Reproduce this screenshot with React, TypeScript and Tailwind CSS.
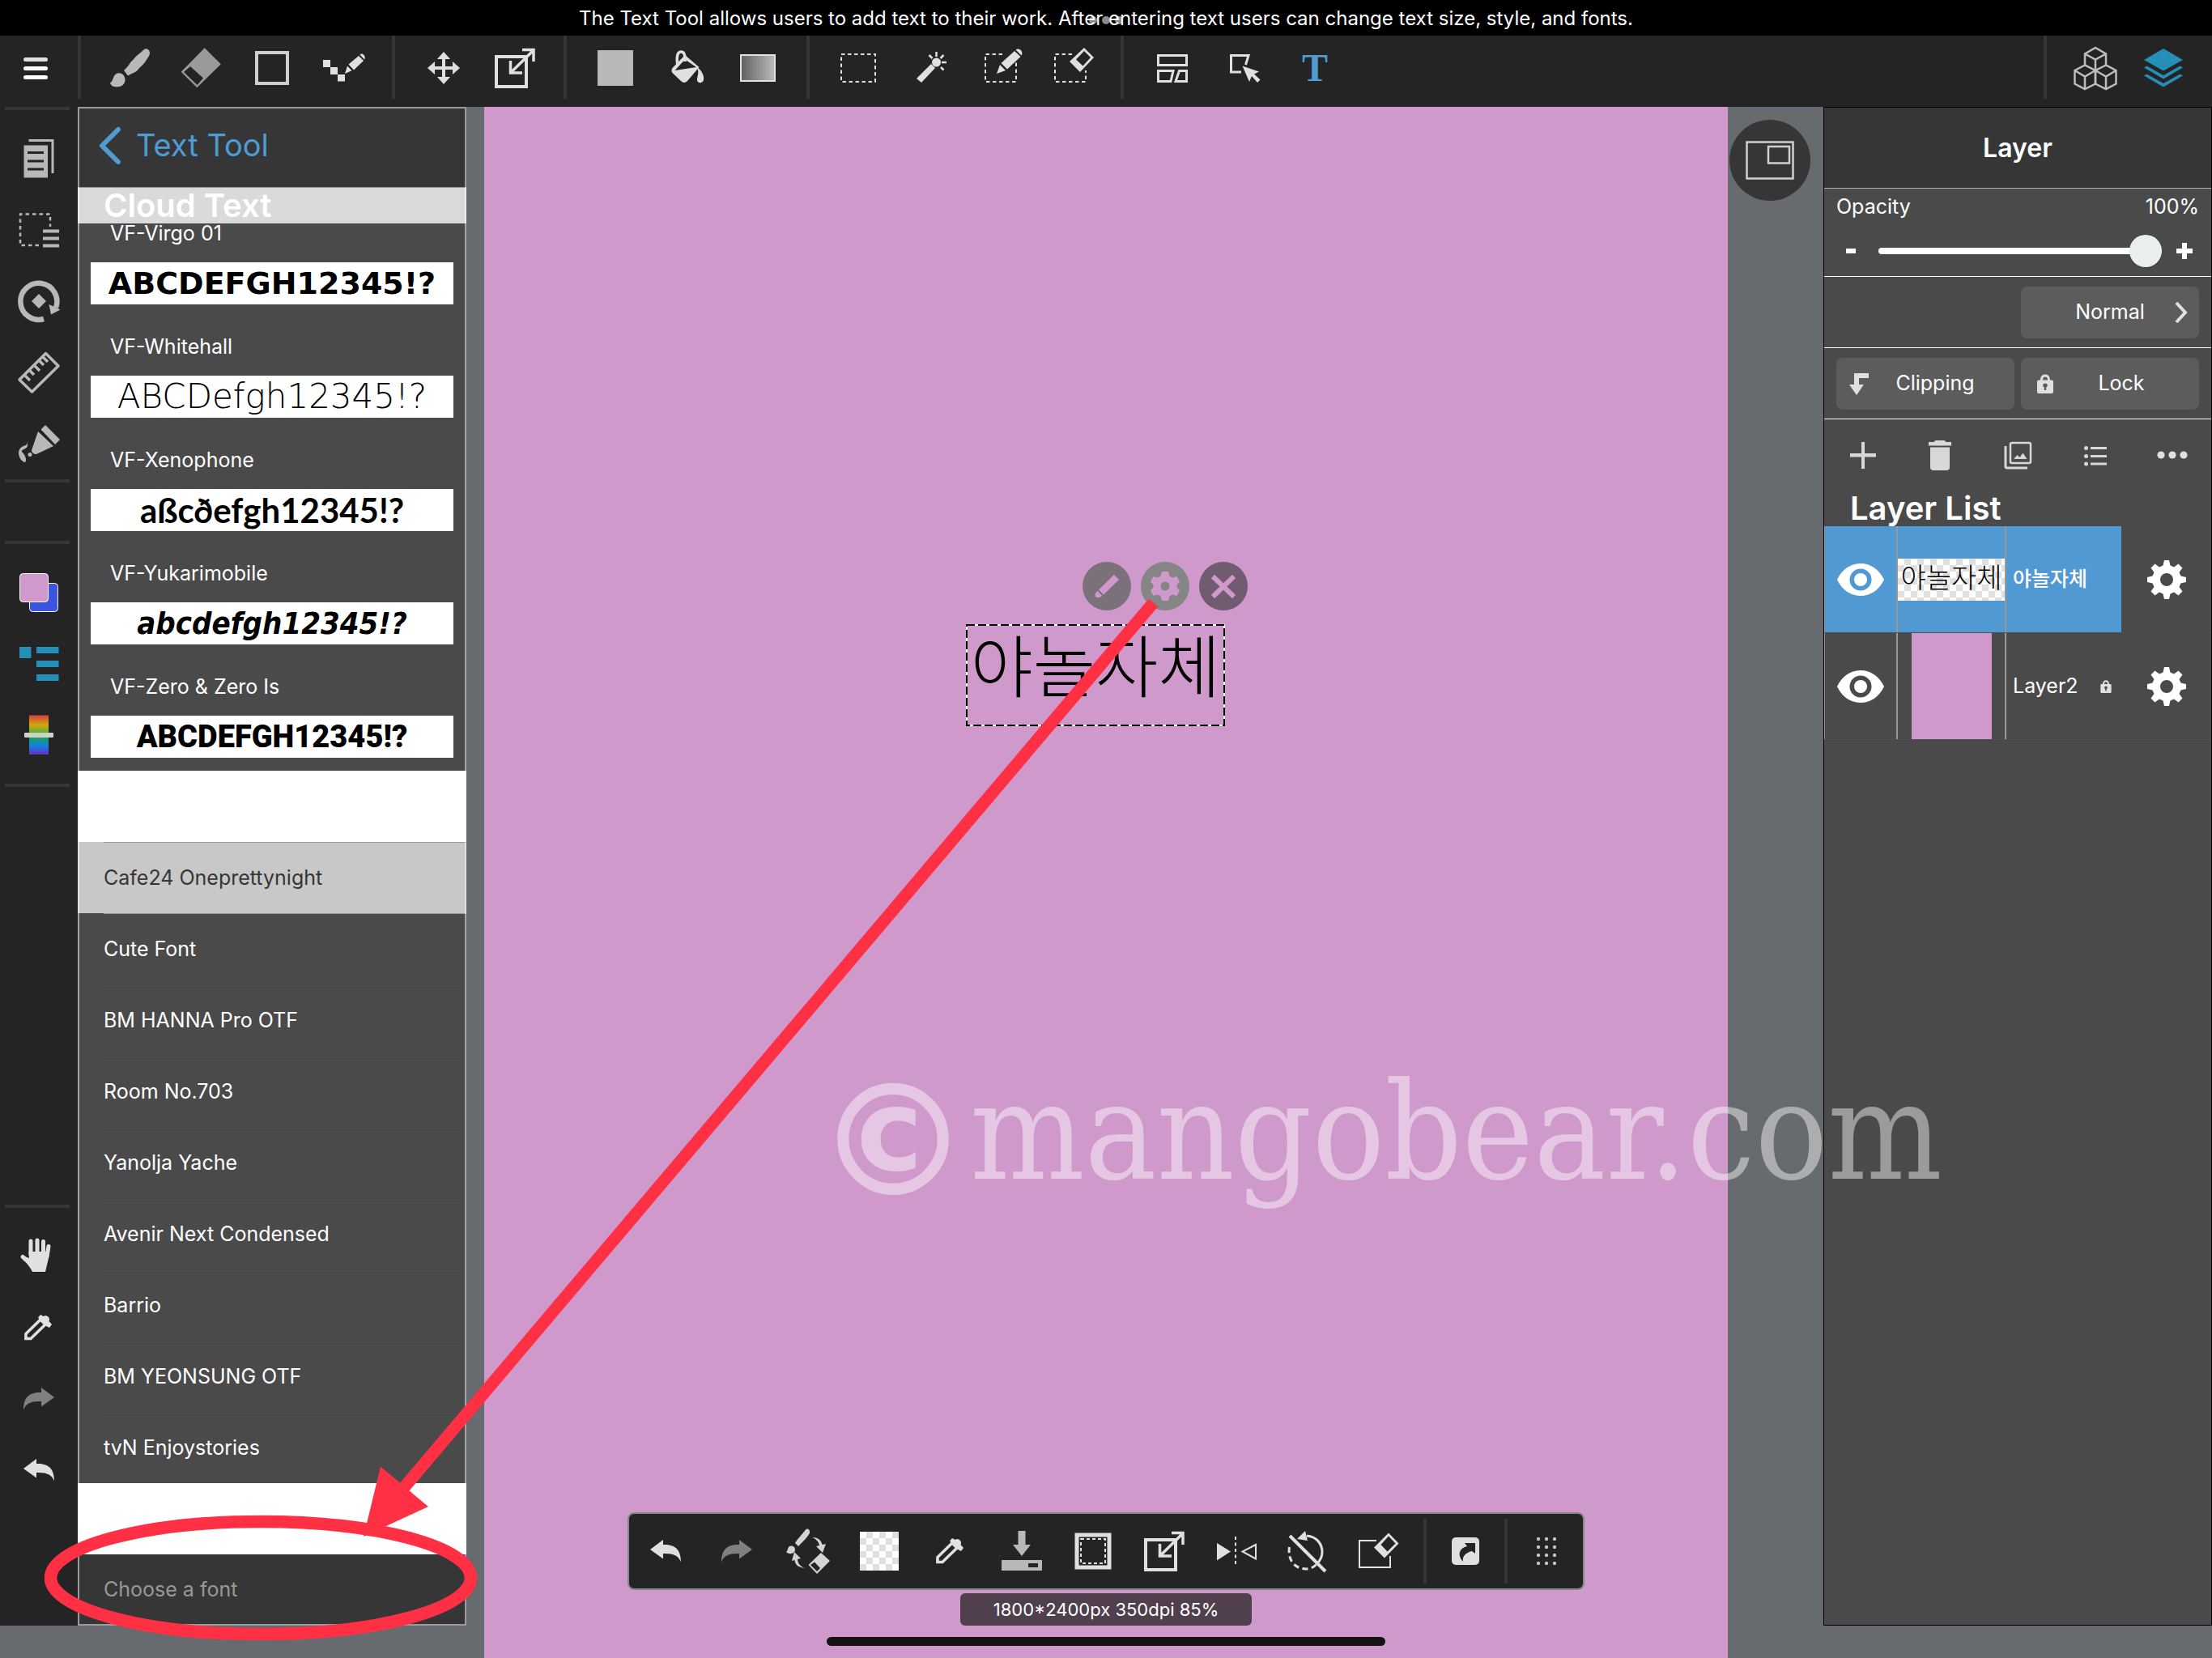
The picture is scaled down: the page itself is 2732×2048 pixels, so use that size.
import { ReactNode } from 'react';

interface IconProps {
  children: ReactNode;
  className?: string;
}

function Icon({ children, className = 'text-[#e0e0e0]' }: IconProps) {
  return (
    <svg viewBox="0 0 56 56" className={`size-14 shrink-0 ${className}`} fill="currentColor" aria-hidden="true">
      {children}
    </svg>
  );
}

const brushIcon = (
  <Icon className="text-[#b8b8b8]">
    <path d="M45 6c3-3.500 8-1 8 3.500 0 3-2 5-3.500 7.500-4 7-8 9-11 13-3 3.500-6 4-12.500 7.500L21 31c2-2 4-4 6-6.500 2-4 4-5 7-8.500 4-5 7-6 11-10z" />
    <path d="M13 34.500c5-1 9 2 9.500 7.500.300 6-4 9.300-10.500 9.300-4 0-7-1.300-8-5.300 4-.500 3-10 9-11.500z" />
  </Icon>
);

const eraserIcon = (
  <Icon className="text-[#9a9a9a]">
    <path fillRule="evenodd" d="M32.700 3.300 52.800 23.300 23.300 52.300 3.700 32.700zM15 26 7 33l16.500 16 7.500-8.500z" />
  </Icon>
);

const squareIcon = (
  <Icon className="text-[#cfcfcf]">
    <path d="M9 9h38v38H9z" fill="none" stroke="currentColor" strokeWidth="4" />
  </Icon>
);

const pixelPenIcon = (
  <Icon>
    <path d="M3 18h9v9H3zM12 27h9v9h-9zM21 36h9v8.500h-9z" />
    <path d="m30 35 3-9.500 5.500 5.700zM34.500 23.500 47 13l6 6-12 11.500zM48.500 11.500c3-3 8 2 5.500 6z" />
  </Icon>
);

const moveIcon = (
  <Icon>
    <path d="M26 26V17h-6l8-9 8 9h-6v9h9v-6l9 8-9 8v-6h-9v9h6l-8 9-8-9h6v-9h-9v6l-9-8 9-8v6z" />
  </Icon>
);

const resizeIcon = (
  <Icon>
    <g fill="none" stroke="currentColor">
      <path d="M5 14h37v37H5z" strokeWidth="4" />
      <path d="M37 5.500h14V20M22.500 19v15H37M23 33.500 51 6" strokeWidth="3.500" />
    </g>
  </Icon>
);

const fillIcon = (
  <Icon className="text-[#b8b8b8]">
    <rect x="6" y="6" width="44" height="44" rx="1" />
  </Icon>
);

const bucketIcon = (
  <Icon>
    <path fillRule="evenodd" d="M26 12 43.500 27 29 44q-4 4-8 0L10.500 34q-2-3 0-6zM26 17.500 13.500 31 40 27z" />
    <path d="M17 25c-1.500-9-1-17 4-17 4.500 0 5 4 5 12" fill="none" stroke="currentColor" strokeWidth="3.500" />
    <path d="M41 27.500c6 3 9 11 8 15-1 5-8 5-8 0 0-5 3-8 0-15z" />
  </Icon>
);

const gradientIcon = (
  <Icon>
    <defs>
      <linearGradient id="tool-gradient">
        <stop offset="0" stopColor="#606060" />
        <stop offset="1" stopColor="#bcbcbc" />
      </linearGradient>
    </defs>
    <rect x="7" y="12" width="42" height="32" fill="url(#tool-gradient)" stroke="currentColor" strokeWidth="2" />
  </Icon>
);

const selectIcon = (
  <Icon>
    <path d="M7 11h42v34H7z" fill="none" stroke="currentColor" strokeWidth="2" strokeDasharray="4.500 3.500" />
  </Icon>
);

const wandIcon = (
  <Icon>
    <path d="m30 23 5 5-17 18-6-5z" />
    <circle cx="36.500" cy="21" r="5.500" />
    <path d="M36.500 8v6M27.500 12l4 4M45.500 12l-4 4M43 21h6M42 27l3.500 3.500" fill="none" stroke="currentColor" strokeWidth="2.500" />
  </Icon>
);

const selectPenIcon = (
  <Icon>
    <path d="M30 11H9v34h38V21" fill="none" stroke="currentColor" strokeWidth="2" strokeDasharray="4.500 3.500" />
    <path d="m23 35 4-11 7 7zM28.500 22 45 7l7.500 7L36 29.500zM46.500 5.500c4-3.500 10 2 7 7z" />
  </Icon>
);

const selectEraserIcon = (
  <Icon>
    <path d="M28 11H7v34h38V31" fill="none" stroke="currentColor" strokeWidth="2" strokeDasharray="4.500 3.500" />
    <path fillRule="evenodd" d="M43 3 55 15 38 33 25 20zM43 7l-10 10.500 8.500 8L51 15z" />
  </Icon>
);

const divideIcon = (
  <Icon>
    <path d="M10.500 12.500h35v12h-35zM10.500 31.500H29L26 44.500H10.500zM45.500 31.500h-9l-4.500 13h13.500z" fill="none" stroke="currentColor" strokeWidth="3" />
  </Icon>
);

const pickIcon = (
  <Icon>
    <path d="M25 33H12.500V12.500H34L30.500 24" fill="none" stroke="currentColor" strokeWidth="3" />
    <path d="m26.500 25.500 20.500 7-6 3 7.500 7-3.500 3.500-7-8-3 7z" />
  </Icon>
);

const cubesIcon = (
  <Icon className="text-[#bdbdbd]">
    <g fill="none" stroke="currentColor" strokeWidth="2.500">
      <path d="M15 24.500V10.500L28 3l13 7.500v14M15 10.500l13 7 13-7M28 17.500V31" />
      <path d="M15 24.500 2.500 31v16.500L15 54l13-6.500V31zM2.500 31 15 38.500 28 31M15 38.500V54" />
      <path d="M41 24.500 28 31v16.500L41 54l12.500-6.500V31zM28 31l13 7.500L53.500 31M41 38.500V54" />
    </g>
  </Icon>
);

const layersIcon = (
  <Icon className="text-[#248fb9]">
    <path d="M24 4 48 18 24 31.500 0 18z" />
    <path d="m0 27.500 3.500-2L24 37l20.500-11.500 3.500 2-24 14zM0 37.500l3.500-2L24 47l20.500-11.500 3.500 2-24 14z" />
  </Icon>
);

const docsIcon = (
  <Icon className="text-[#b8b8b8]">
    <path fillRule="evenodd" d="M9.500 11.500H39v40H9.500zM14 19v3h20v-3zM14 29.500v3h20v-3zM14 39.500v3h20v-3z" />
    <path d="M15.500 5.500H45V46" fill="none" stroke="currentColor" strokeWidth="3" />
  </Icon>
);

const selectionMenuIcon = (
  <Icon className="text-[#b8b8b8]">
    <path d="M28 47H5V8.500h37V24" fill="none" stroke="currentColor" strokeWidth="2.500" strokeDasharray="4.500 4" />
    <path d="M33 27.500h20v4H33zM33 36.500h20v4H33zM33 45.500h20v4H33z" />
  </Icon>
);

const rotateIcon = (
  <Icon className="text-[#b8b8b8]">
    <path d="M34 50A22.500 22.500 0 1 1 49 36" fill="none" stroke="currentColor" strokeWidth="6.500" />
    <path d="m40.500 32 14 6.500L43 44.500zM28 19l9 9-9 9-9-9z" />
  </Icon>
);

const rulerIcon = (
  <Icon className="text-[#b8b8b8]">
    <g fill="none" stroke="currentColor" strokeWidth="3.500" strokeLinejoin="round">
      <path d="M36.500 4.500 52 20 19.500 52 4 37z" />
      <path d="m10 31 7 7M16 25l6 6M22 19l7 7M28 13l6 6M33 9l6 6" />
    </g>
  </Icon>
);

const glueIcon = (
  <Icon className="text-[#b8b8b8]">
    <path d="m36 5 18 18-6 6-17.500-18.500zM27 13l19 18-21 10c-3 0-6-2-6-5z" />
    <circle cx="17" cy="41.500" r="2.500" />
    <path d="M13 24c2 5-1 6-4 7-6 2-7 8-5 13 1 4 5 7 7 7 3-4-1-10-4-13-1-4 8-2 7-10-.2-1.500-.5-3-1-4z" />
  </Icon>
);

const swatchesIcon = (
  <Icon>
    <rect x="16.500" y="16.500" width="35" height="35" rx="4" fill="#3b55de" stroke="#fff" />
    <rect x="4.500" y="4.500" width="35" height="35" rx="4" fill="#cf99cc" stroke="#fff" />
  </Icon>
);

const listIcon = (
  <Icon className="text-[#248fb9]">
    <path d="M4 7h14.500v14H4zM25 7h27.500v8H25zM25 24h27.500v8H25zM25 41h27.500v8H25z" />
  </Icon>
);

const rainbowIcon = (
  <Icon>
    <defs>
      <linearGradient id="rainbow" x2="0" y2="1">
        <stop offset="0" stopColor="#d64040" />
        <stop offset=".25" stopColor="#d0a810" />
        <stop offset=".45" stopColor="#5cb030" />
        <stop offset=".6" stopColor="#189c70" />
        <stop offset=".78" stopColor="#1080e0" />
        <stop offset="1" stopColor="#6a2cc8" />
      </linearGradient>
    </defs>
    <path d="M16 3.500h24V52H16z" fill="url(#rainbow)" />
    <rect x="10" y="25" width="36" height="6" rx="1" fill="#c9d4c6" />
  </Icon>
);

const handIcon = (
  <Icon>
    <path d="M18 9v17M26 8v17M33.500 9.500V26M40 15.500 38 28M8 28.500l10 8" fill="none" stroke="currentColor" strokeWidth="5" strokeLinecap="round" />
    <path d="M15.500 22h24.500l.500 6-4.500 19H20c-3-6-6-10-12-15l2-4 6 2z" />
  </Icon>
);

const pipetteIcon = (
  <Icon>
    <path d="M12 41.500v-6L30 18l6 6-18 17.500z" fill="none" stroke="currentColor" strokeWidth="3.500" />
    <path d="m10.500 37 6 6h-6zM27 15.500l3-3.500 4 2c3-3 9 2 6.500 6l3.500 4-3 4-4-2-8-8z" />
  </Icon>
);

const undoPath = <path d="M9 26 25 14v6c14-.5 22 5 22 21.500-3-8-9-11-22-10.500v6.500z" />;
const redoPath = <path d="M47 26 31 14v6C17 19.500 9 25 9 41.500c3-8 9-11 22-10.500v6.500z" />;
const undoIcon = <Icon>{undoPath}</Icon>;
const redoIcon = <Icon className="text-[#808080]">{redoPath}</Icon>;

const swapIcon = (
  <Icon className="text-[#d4d4d4]">
    <path d="M25 1.500c2-2.500 6 0 5 4C29 9 21 17 16 22l-4-4C15 13 21 7 25 1.500zM5 22c3-1.500 7 0 7 4 0 5-7 7-11 3 2-.5 1.500-5.500 4-7z" />
    <path d="M33 11c7 0 11 3 12.500 9l4.500-1-4 11-8-8 4-1c-1-5-4-8-9-10zM24 49c-8-1-12-4-12.500-10L8 40l3-11 8 8-4 1c0 5 4 9 9 11z" />
    <path fillRule="evenodd" d="M44 30 55 40 39 56 28.500 45zM36 41.500 31 45l8 8 4-4z" />
  </Icon>
);

const saveIcon = (
  <Icon className="text-[#b8b8b8]">
    <path fillRule="evenodd" d="M23.500 3h9v17h6.500L28 34 17 20h6.500zM3 39h50v13H3zM36 43v5h12v-5z" />
  </Icon>
);

const frameIcon = (
  <Icon>
    <g fill="none" stroke="currentColor">
      <path d="M8 8h40v40H8z" strokeWidth="5" />
      <path d="M13 13h30v30H13z" strokeWidth="2" strokeDasharray="4 3" />
    </g>
  </Icon>
);

const flipIcon = (
  <Icon>
    <path d="m5 18 17 10.500L5 39.500z" />
    <path d="M53 20v17.500L36.500 28.500z" fill="none" stroke="currentColor" strokeWidth="2" />
    <path d="M28 10v37" stroke="currentColor" strokeWidth="2" strokeDasharray="4 3.500" />
  </Icon>
);

const noRotateIcon = (
  <Icon>
    <g fill="none" stroke="currentColor" strokeWidth="3">
      <path d="M28 9c12 1 19 10 19 20 0 6-2 10-6 14" />
      <path d="M6.500 23C4 40 14 50 27 50c5 0 10-2 13-6" strokeDasharray="7 4.500" />
      <path d="m7 9 44 44" strokeWidth="4" />
    </g>
    <path d="m16 13 10-10 3 12z" />
  </Icon>
);

const boxEraserIcon = (
  <Icon>
    <path d="M26 15H5v33h38V34" fill="none" stroke="currentColor" strokeWidth="2" />
    <path fillRule="evenodd" d="M41 5.500 53.500 18.500 36 36.500 23 23.500zM41 9.500 31.500 20l8 8.500 10-10z" />
  </Icon>
);

const shareIcon = (
  <Icon>
    <rect x="11" y="11" width="34" height="34" rx="5" />
    <path d="M25 41c-8-9-4-17 5-19l-3-4h13v13l-4-3c-8 2-12 6-11 13z" fill="#242424" />
  </Icon>
);

const dotsIcon = (
  <Icon className="text-[#c4c4c4]">
    {[13, 23, 33, 43].map((y) => [18, 28, 38].map((x) => <circle key={`${x}-${y}`} cx={x} cy={y} r="2.200" />))}
  </Icon>
);

const textToolGlyph = <span className="font-['Liberation_Serif',serif] text-5xl font-bold text-[#4f9bd2]">T</span>;

interface Tool {
  label: string;
  icon: ReactNode;
}

const topGroups: Tool[][] = [
  [
    { label: 'Brush', icon: brushIcon },
    { label: 'Eraser', icon: eraserIcon },
    { label: 'Shape', icon: squareIcon },
    { label: 'Dot pen', icon: pixelPenIcon },
  ],
  [
    { label: 'Move', icon: moveIcon },
    { label: 'Transform', icon: resizeIcon },
  ],
  [
    { label: 'Fill', icon: fillIcon },
    { label: 'Bucket', icon: bucketIcon },
    { label: 'Gradient', icon: gradientIcon },
  ],
  [
    { label: 'Select', icon: selectIcon },
    { label: 'Magic wand', icon: wandIcon },
    { label: 'Select pen', icon: selectPenIcon },
    { label: 'Select eraser', icon: selectEraserIcon },
  ],
  [
    { label: 'Divide', icon: divideIcon },
    { label: 'Operation', icon: pickIcon },
    { label: 'Text', icon: textToolGlyph },
  ],
];

const sideTop: Tool[] = [
  { label: 'Pages', icon: docsIcon },
  { label: 'Selection menu', icon: selectionMenuIcon },
  { label: 'Rotate view', icon: rotateIcon },
  { label: 'Ruler', icon: rulerIcon },
  { label: 'Material', icon: glueIcon },
];

const sideColors: Tool[] = [
  { label: 'Colors', icon: swatchesIcon },
  { label: 'Tool options', icon: listIcon },
  { label: 'Palette', icon: rainbowIcon },
];

const sideBottom: Tool[] = [
  { label: 'Hand', icon: handIcon },
  { label: 'Eyedropper', icon: pipetteIcon },
  { label: 'Redo', icon: redoIcon },
  { label: 'Undo', icon: undoIcon },
];

const shortcuts: Tool[] = [
  { label: 'Undo', icon: undoIcon },
  { label: 'Redo', icon: redoIcon },
  { label: 'Swap brush and eraser', icon: swapIcon },
  { label: 'Transparent', icon: <span className="size-12 bg-[repeating-conic-gradient(#e0e0e0_0_25%,#fff_0_50%)] bg-[length:16px_16px]" /> },
  { label: 'Eyedropper', icon: pipetteIcon },
  { label: 'Save', icon: saveIcon },
  { label: 'Select all', icon: frameIcon },
  { label: 'Transform', icon: resizeIcon },
  { label: 'Flip', icon: flipIcon },
  { label: 'Reset rotation', icon: noRotateIcon },
  { label: 'Clear', icon: boxEraserIcon },
];

const cloudFonts = [
  { name: 'VF-Virgo 01', sample: 'ABCDEFGH12345!?', style: "font-['DejaVu_Sans',sans-serif] text-[38px] font-bold" },
  { name: 'VF-Whitehall', sample: 'ABCDefgh12345!?', style: "font-['DejaVu_Sans',sans-serif] text-[42px] font-extralight" },
  { name: 'VF-Xenophone', sample: 'aßcðefgh12345!?', style: "font-['Lato',sans-serif] text-[42px] font-bold" },
  { name: 'VF-Yukarimobile', sample: 'abcdefgh12345!?', style: "font-['DejaVu_Sans_Condensed','DejaVu_Sans',sans-serif] text-[38px] font-bold italic" },
  { name: 'VF-Zero & Zero Is', sample: 'ABCDEFGH12345!?', style: "font-['Roboto',sans-serif] text-[38px] font-black" },
];

const localFonts = [
  'Cafe24 Oneprettynight',
  'Cute Font',
  'BM HANNA Pro OTF',
  'Room No.703',
  'Yanolja Yache',
  'Avenir Next Condensed',
  'Barrio',
  'BM YEONSUNG OTF',
  'tvN Enjoystories',
];

function ToolButton({ label, icon }: Tool) {
  return (
    <button type="button" aria-label={label} className="flex size-[88px] shrink-0 items-center justify-center">
      {icon}
    </button>
  );
}

function TopBar() {
  return (
    <nav className="flex h-[88px] bg-[#242424]">
      <button type="button" aria-label="Menu" className="flex h-20 w-24 items-center justify-center pr-2">
        <span className="flex flex-col gap-[6px]">
          <span className="h-[5px] w-[30px] rounded-full bg-[#e0e0e0]" />
          <span className="h-[5px] w-[30px] rounded-full bg-white" />
          <span className="h-[5px] w-[30px] rounded-full bg-white" />
        </span>
      </button>
      {topGroups.map((group, i) => (
        <div key={i} className="flex h-[78px] items-center border-l-4 border-[#363636] px-4 pt-[2px]">
          {group.map((tool) => (
            <ToolButton key={tool.label} {...tool} />
          ))}
        </div>
      ))}
      <div className="ml-auto flex h-[78px] items-center border-l-4 border-[#363636] pt-[2px] pr-3 pl-4">
        <ToolButton label="Materials" icon={cubesIcon} />
        <ToolButton label="Layers" icon={layersIcon} />
      </div>
    </nav>
  );
}

function SideGroup({ tools }: { tools: Tool[] }) {
  return (
    <div className="-mx-[2px]">
      {tools.map((tool) => (
        <ToolButton key={tool.label} {...tool} />
      ))}
    </div>
  );
}

function SideBar() {
  return (
    <aside className="flex w-24 shrink-0 flex-col items-center bg-[#242424]">
      <div className="mr-1 w-20 border-y-4 border-[#363636] pt-4">
        <SideGroup tools={sideTop} />
      </div>
      <div className="mt-[72px] mr-1 w-20 border-y-4 border-[#363636] py-4">
        <SideGroup tools={sideColors} />
      </div>
      <div className="mt-auto mr-1 mb-[148px] w-20 border-t-4 border-[#363636] pt-4">
        <SideGroup tools={sideBottom} />
      </div>
    </aside>
  );
}

function FontPanel() {
  return (
    <section className="relative w-[480px] shrink-0 bg-[#4a4a4a]">
      <button type="button" className="flex h-[100px] w-full items-center gap-4 border-b border-[#989898] bg-[#363636] pb-1 pl-6 text-[38px] text-[#4f9bd2]">
        <svg viewBox="0 0 32 48" className="h-12 w-8" fill="none" stroke="currentColor" strokeWidth="6" strokeLinecap="round" strokeLinejoin="round" aria-hidden="true">
          <path d="M26 4 6 24l20 20" />
        </svg>
        Text Tool
      </button>
      <h2 className="relative z-10 h-11 bg-[#dadada] pl-8 text-[40px] leading-[44px] font-semibold text-white">Cloud Text</h2>
      <ul className="-mt-6">
        {cloudFonts.map((font) => (
          <li key={font.name}>
            <button type="button" className="block h-[140px] w-full px-4 text-left">
              <span className="block py-6 pl-6 text-[25px] leading-6">{font.name}</span>
              <span className={`block h-[52px] overflow-hidden bg-white text-center leading-[52px] whitespace-nowrap text-black ${font.style}`}>
                {font.sample}
              </span>
              <span className="block h-4" />
            </button>
          </li>
        ))}
      </ul>
      <div className="h-[88px] bg-white" />
      <ul>
        {localFonts.map((name, i) => (
          <li key={name} className={i === 0 ? 'bg-[#c8c8c8] text-[#363636]' : ''}>
            <button
              type="button"
              className={`ml-8 flex h-[88px] w-[448px] items-center border-t text-[25px] ${i < 2 ? 'border-[#989898]' : 'border-[#464646]'}`}
            >
              {name}
            </button>
          </li>
        ))}
      </ul>
      <div className="h-[88px] bg-white" />
      <button type="button" className="flex h-[88px] w-full items-center bg-[#363636] pl-8 text-[25px] text-[#989898]">
        Choose a font
      </button>
      <div className="pointer-events-none absolute inset-0 z-20 border-2 border-white/50" />
    </section>
  );
}

function Canvas() {
  return (
    <main className="relative -mb-10 flex min-w-0 flex-1 pr-[118px] pl-[22px]">
      <div className="relative flex-1 bg-[#cf99cc]">
        {/* text object placed on the canvas */}
        <div className="absolute top-[639px] left-[595px] h-[126px] w-[320px]">
          <svg className="absolute inset-0 size-full" fill="none" aria-hidden="true">
            <rect x="1" y="1" width="318" height="124" stroke="#fff" strokeWidth="2" />
            <rect x="1" y="1" width="318" height="124" stroke="#000" strokeWidth="2" strokeDasharray="10 4" />
          </svg>
          <p className="text-center font-['Noto_Sans_CJK_KR',sans-serif] text-[84px] leading-[96px] font-light whitespace-nowrap text-black">야놀자체</p>
        </div>
        <div className="absolute top-[562px] left-[739px] flex gap-3 text-[#cf99cc]">
          <button type="button" aria-label="Edit text" className="size-[60px] rounded-full bg-[#7a717a]">
            <svg viewBox="0 0 60 60" fill="currentColor" aria-hidden="true">
              <path d="m39 16 6 6-19 18.500-6-6zM18.500 36l6 6c-3 2-7 3-8.500 1s0-5 2.500-7z" />
            </svg>
          </button>
          <button type="button" aria-label="Text settings" className="size-[60px] rounded-full bg-[#858585]">
            <svg viewBox="0 0 60 60" fill="currentColor" aria-hidden="true">
              <path
                fillRule="evenodd"
                d="M26 12h8l1.500 5.500 3.500 2 5.500-1.500 3.500 6.500-3.500 4v3l3.500 4-3.500 6.500-5.500-1.500-3.500 2L34 48h-8l-1.500-5.500-3.500-2-5.500 1.500-3.500-6.500 3.500-4v-3l-3.500-4 3.500-6.500 5.500 1.500 3.500-2zM30 24.500a5.500 5.500 0 1 0 0 11 5.500 5.500 0 0 0 0-11z"
              />
            </svg>
          </button>
          <button type="button" aria-label="Delete text" className="size-[60px] rounded-full bg-[#715b70]">
            <svg viewBox="0 0 60 60" fill="none" stroke="currentColor" strokeWidth="6" aria-hidden="true">
              <path d="m17 18 26 25M43 18 17 43" />
            </svg>
          </button>
        </div>
        <div className="absolute bottom-[84px] left-1/2 flex h-24 -translate-x-1/2 items-center rounded-lg border-2 border-[#888a88] bg-[#242424] px-px text-white">
          {shortcuts.map((tool) => (
            <ToolButton key={tool.label} {...tool} />
          ))}
          <div className="ml-3 flex h-20 items-center border-x-4 border-[#363636] px-1">
            <ToolButton label="Share" icon={shareIcon} />
          </div>
          <div className="pl-1">
            <ToolButton label="More" icon={dotsIcon} />
          </div>
        </div>
        <p className="absolute bottom-10 left-1/2 h-10 w-[360px] -translate-x-1/2 rounded-md bg-[#50404e] text-center text-[22px] leading-10 text-white">
          1800*2400px 350dpi 85%
        </p>
        <div className="absolute bottom-[15px] left-1/2 h-[11px] w-[690px] -translate-x-1/2 rounded-full bg-[#141414]" />
      </div>
      <button type="button" aria-label="Navigator" className="absolute top-4 right-4 flex size-[100px] items-center justify-center rounded-full bg-[#363636]">
        <svg viewBox="0 0 60 48" className="h-12 w-[60px]" fill="none" stroke="#d0d0d0" strokeWidth="2.500" aria-hidden="true">
          <path d="M1.500 1.500h57v45h-57zM28 7h26v20.500H28z" />
        </svg>
      </button>
    </main>
  );
}

function LockGlyph({ className }: { className: string }) {
  return (
    <svg viewBox="0 0 20 24" className={className} fill="#e0e0e0" aria-hidden="true">
      <path
        fillRule="evenodd"
        d="M4 7.500C4 3 6.500.500 10 .500S16 3 16 7.500h2q2 0 2 2V22q0 2-2 2H2q-2 0-2-2V9.500q0-2 2-2zm3 0h6C13 5 12 3.500 10 3.500S7 5 7 7.500zM10 11.500c-3.500 0-3.500 4-1.200 5v3.500h2.400v-3.500c2.300-1 2.300-5-1.200-5z"
      />
    </svg>
  );
}

interface LayerRowProps {
  name: string;
  active?: boolean;
  thumb: ReactNode;
}

function LayerRow({ name, active, thumb }: LayerRowProps) {
  return (
    <li className="flex h-[132px] border-b border-[#505050]">
      <div className={`flex w-[367px] ${active ? 'bg-[#5199d3] font-medium' : ''}`}>
        <button type="button" aria-label={`Toggle ${name}`} className="flex w-[91px] items-center justify-center border-r-2 border-l border-[#989898]">
          <svg viewBox="0 0 58 40" className="h-10 w-[58px]" fill="#fff" aria-hidden="true">
            <path
              fillRule="evenodd"
              d="M0 20C6 7 17 0 29 0s23 7 29 20c-6 13-17 20-29 20S6 33 0 20zm29-13.500a13.500 13.500 0 1 0 0 27 13.500 13.500 0 0 0 0-27z"
            />
            <circle cx="29" cy="20" r="8" />
          </svg>
        </button>
        <div className="flex w-[134px] items-center justify-center border-r-2 border-[#989898]">{thumb}</div>
        <div className="flex flex-1 items-center justify-between pr-3 pl-2">
          <span className="font-[Inter,'Noto_Sans_CJK_KR',sans-serif] text-[25px]">{name}</span>
          {!active && <LockGlyph className="h-4 w-[14px]" />}
        </div>
      </div>
      <button type="button" aria-label={`${name} settings`} className="flex flex-1 items-center justify-center">
        <svg viewBox="0 0 48 48" className="size-12" fill="#fff" aria-hidden="true">
          <path
            fillRule="evenodd"
            d="M21 0h6l1.500 6.500 4.500 2 5.500-4 5 5-4 5.500 2 4.500L48 21v6l-6.500 1.500-2 4.500 4 5.500-5 5-5.500-4-4.500 2L27 48h-6l-1.500-6.500-4.500-2-5.500 4-5-5 4-5.500-2-4.500L0 27v-6l6.500-1.500 2-4.500-4-5.500 5-5 5.500 4 4.500-2zM24 16a8 8 0 1 0 0 16 8 8 0 0 0 0-16z"
          />
        </svg>
      </button>
    </li>
  );
}

const layerActions: Tool[] = [
  { label: 'Add layer', icon: <Icon className="text-[#d8d8d8]"><path d="M26 12h4v14h14v4.500H30V45h-4V30.500H12V26h14z" /></Icon> },
  {
    label: 'Delete layer',
    icon: (
      <Icon className="text-[#d8d8d8]">
        <path d="M14 12h6.500l2-2h11l2 2H42v4.500H14zM16 18.500h24V43q0 4-4 4H20q-4 0-4-4z" />
      </Icon>
    ),
  },
  {
    label: 'Duplicate layer',
    icon: (
      <Icon className="text-[#d8d8d8]">
        <rect x="19" y="13" width="25" height="25" rx="2" fill="none" stroke="currentColor" strokeWidth="2.500" />
        <path d="M13 17v25q0 2 2 2h25" fill="none" stroke="currentColor" strokeWidth="3" />
        <path d="m23 33 4.500-5 3 3 4-5.500 5 7.500z" />
      </Icon>
    ),
  },
  {
    label: 'Layer menu',
    icon: (
      <Icon className="text-[#d8d8d8]">
        <path d="M22 18h20v3H22zM22 28h20v3H22zM22 37.500h20v3H22z" />
        <circle cx="16.500" cy="19.500" r="2.500" />
        <circle cx="16.500" cy="29.500" r="2.500" />
        <circle cx="16.500" cy="39" r="2.500" />
      </Icon>
    ),
  },
  {
    label: 'More',
    icon: (
      <Icon className="text-[#e0e0e0]">
        <circle cx="14" cy="28" r="4.600" />
        <circle cx="28" cy="28" r="4.600" />
        <circle cx="42" cy="28" r="4.600" />
      </Icon>
    ),
  },
];

function LayerPanel() {
  return (
    <aside className="w-[480px] shrink-0 border border-black bg-[#4a4a4a] text-[25px]">
      <h2 className="flex h-[99px] items-center justify-center bg-[#363636] text-[32px] font-semibold">Layer</h2>
      <div className="border-t border-[#b0b0b0] px-[15px]">
        <div className="flex h-[46px] items-center justify-between">
          <label htmlFor="opacity">Opacity</label>
          <span>100%</span>
        </div>
        <div className="flex h-[62px] items-center">
          <button type="button" aria-label="Decrease opacity" className="flex w-[52px] justify-start pl-3">
            <span className="h-[6px] w-3 bg-white" />
          </button>
          <input
            id="opacity"
            type="range"
            min="0"
            max="100"
            defaultValue="100"
            className="h-10 min-w-0 flex-1 appearance-none bg-transparent [&::-webkit-slider-runnable-track]:h-2 [&::-webkit-slider-runnable-track]:rounded-full [&::-webkit-slider-runnable-track]:bg-white [&::-webkit-slider-thumb]:-mt-4 [&::-webkit-slider-thumb]:size-10 [&::-webkit-slider-thumb]:appearance-none [&::-webkit-slider-thumb]:rounded-full [&::-webkit-slider-thumb]:bg-[#e9eeee] [&::-webkit-slider-thumb]:shadow"
          />
          <button type="button" aria-label="Increase opacity" className="flex w-[46px] justify-end pr-2">
            <svg viewBox="0 0 20 20" className="size-5" fill="#fff" aria-hidden="true">
              <path d="M7 0h6v7h7v6h-7v7H7v-7H0V7h7z" />
            </svg>
          </button>
        </div>
      </div>
      <div className="flex h-[88px] items-center justify-end border-t border-white px-[15px]">
        <button type="button" className="relative h-16 w-[220px] rounded-lg bg-[#5c5c5c]">
          Normal
          <svg viewBox="0 0 16 28" className="absolute top-[18px] right-[14px] h-7 w-4" fill="none" stroke="#e0e0e0" strokeWidth="4" aria-hidden="true">
            <path d="m2 2 11 12L2 26" />
          </svg>
        </button>
      </div>
      <div className="flex h-[89px] items-center gap-2 border-y border-white px-[15px]">
        <button type="button" className="flex h-16 flex-1 items-center rounded-lg bg-[#5c5c5c] px-4">
          <svg viewBox="0 0 24 28" className="h-7 w-6" fill="#e0e0e0" aria-hidden="true">
            <path d="M6 1h18v6H12v8h6L9 28 0 15h6z" />
          </svg>
          <span className="flex-1 text-center">Clipping</span>
        </button>
        <button type="button" className="flex h-16 flex-1 items-center rounded-lg bg-[#5c5c5c] pr-3 pl-5">
          <LockGlyph className="h-6 w-5" />
          <span className="flex-1 text-center">Lock</span>
        </button>
      </div>
      <div className="grid h-[88px] grid-cols-5 items-center">
        {layerActions.map((action) => (
          <button key={action.label} type="button" aria-label={action.label} className="flex justify-center">
            {action.icon}
          </button>
        ))}
      </div>
      <h3 className="h-11 pl-8 text-[40px] leading-[44px] font-semibold">Layer List</h3>
      <ul>
        <LayerRow
          name="야놀자체"
          active
          thumb={
            <span className="block h-[52px] w-full bg-[repeating-conic-gradient(#e0e0e0_0_25%,#fff_0_50%)] bg-[length:16px_16px] text-center font-['Noto_Sans_CJK_KR',sans-serif] text-[34px] leading-[44px] font-light whitespace-nowrap text-black">
              야놀자체
            </span>
          }
        />
        <LayerRow name="Layer2" thumb={<span className="block h-full w-[99px] bg-[#cf99cc]" />} />
      </ul>
    </aside>
  );
}

export default function App() {
  return (
    <div className="relative flex min-h-screen flex-col overflow-hidden bg-[#676a6e] font-[Inter,sans-serif] text-white">
      <header className="relative flex h-11 items-center justify-center bg-black">
        <span className="absolute top-5 flex gap-[6px]">
          <span className="size-[10px] rounded-full bg-[#8a8a8a]" />
          <span className="size-[10px] rounded-full bg-[#8a8a8a]" />
          <span className="size-[10px] rounded-full bg-[#8a8a8a]" />
        </span>
        <p className="relative pt-px text-2xl">
          The Text Tool allows users to add text to their work. After entering text users can change text size, style, and fonts.
        </p>
      </header>
      <TopBar />
      <div className="flex flex-1 pb-10">
        <SideBar />
        <FontPanel />
        <Canvas />
        <LayerPanel />
      </div>
      <p className="pointer-events-none absolute top-[1292px] left-[1008px] flex items-center font-['DejaVu_Serif_Condensed','DejaVu_Serif',serif] text-[166px] leading-[190px] whitespace-nowrap text-white/45">
        <span className="pt-6 font-['DejaVu_Sans',sans-serif] text-[190px] leading-[190px] font-bold">©</span>
        mangobear.com
      </p>
      <svg viewBox="0 0 2732 2048" className="pointer-events-none absolute inset-0 z-30 w-full" aria-hidden="true">
        <path d="M1424.500 744.500 496 1841" stroke="#ff3044" strokeWidth="15" />
        <path d="m449 1898 21-86.500 59 49.500z" fill="#ff3044" />
        <ellipse cx="322" cy="1949" rx="259.500" ry="69.500" fill="none" stroke="#ff3044" strokeWidth="15.500" />
      </svg>
    </div>
  );
}
